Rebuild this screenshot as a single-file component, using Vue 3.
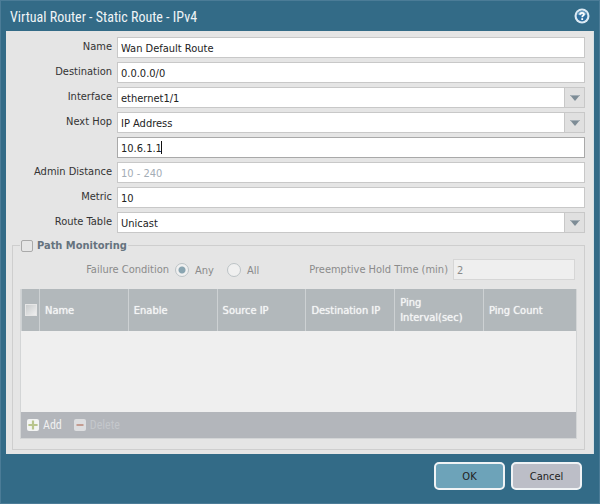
<script setup>
import { ref } from 'vue'

const fields = ref([
  { id: 'name', label: 'Name', kind: 'text', value: 'Wan Default Route' },
  { id: 'destination', label: 'Destination', kind: 'text', value: '0.0.0.0/0' },
  { id: 'interface', label: 'Interface', kind: 'select', value: 'ethernet1/1' },
  { id: 'next-hop', label: 'Next Hop', kind: 'select', value: 'IP Address' },
  { id: 'next-hop-ip', label: '', kind: 'text', value: '10.6.1.1', active: true },
  { id: 'admin-distance', label: 'Admin Distance', kind: 'text', value: '', placeholder: '10 - 240' },
  { id: 'metric', label: 'Metric', kind: 'text', value: '10' },
  { id: 'route-table', label: 'Route Table', kind: 'select', value: 'Unicast' },
])
const columns = ['Name', 'Enable', 'Source IP', 'Destination IP', 'Ping Interval(sec)', 'Ping Count']
const monitoring = ref(false)
const condition = ref('any')
const holdTime = ref('2')
</script>

<template>
  <form class="dialog" @submit.prevent>
    <header class="titlebar">
      <h1>Virtual Router - Static Route - IPv4</h1>
      <button type="button" class="help" aria-label="Help">
        <svg viewBox="0 0 16 16" width="16" height="16">
          <circle cx="8" cy="8" r="7.5" fill="#dceaf4" />
          <circle cx="8" cy="8" r="5.4" fill="#2f6f9f" />
          <path d="M3.2 6.4a5 5 0 0 1 9.6 0Q8 8.6 3.2 6.4z" fill="#6d9fc2" />
          <path d="M6 6.7C6 4.2 10 4.3 10 6.4 10 7.7 8.2 7.7 8.2 9.3" fill="none" stroke="#fff" stroke-width="1.7" />
          <rect x="7.3" y="10.2" width="1.8" height="1.8" fill="#fff" />
        </svg>
      </button>
    </header>

    <main class="panel">
      <div class="fields">
        <div v-for="f in fields" :key="f.id" class="field">
          <label :for="f.id">{{ f.label }}</label>
          <div class="control" :class="{ active: f.active }">
            <select v-if="f.kind === 'select'" :id="f.id" v-model="f.value">
              <option>{{ f.value }}</option>
            </select>
            <input v-else :id="f.id" v-model="f.value" type="text" :placeholder="f.placeholder" autocomplete="off">
            <span v-if="f.kind === 'select'" class="trigger" aria-hidden="true">
              <svg viewBox="0 0 10 6" width="10" height="6"><path d="M0 0h10L5 6z" fill="#7d8c96" /><path d="M0 0h10L9 1H1z" fill="#a4aeb5" /></svg>
            </span>
            <span v-if="f.active" class="caret" aria-hidden="true"></span>
          </div>
        </div>
      </div>

      <fieldset class="monitor">
        <legend>
          <input id="path-monitoring" v-model="monitoring" type="checkbox" class="check">
          <label for="path-monitoring">Path Monitoring</label>
        </legend>

        <div class="options">
          <span id="condition-label" class="condition">Failure Condition</span>
          <div class="radios" role="radiogroup" aria-labelledby="condition-label">
            <label><input v-model="condition" type="radio" name="condition" value="any" disabled><span>Any</span></label>
            <label><input v-model="condition" type="radio" name="condition" value="all" disabled><span>All</span></label>
          </div>
          <label class="hold-label" for="hold-time">Preemptive Hold Time (min)</label>
          <input id="hold-time" v-model="holdTime" class="hold" type="text" disabled>
        </div>

        <div class="grid">
          <table>
            <thead>
              <tr>
                <th class="pick"><input type="checkbox" class="check small" aria-label="Select all" disabled></th>
                <th v-for="c in columns" :key="c" scope="col">{{ c }}</th>
              </tr>
            </thead>
          </table>
          <div class="empty"></div>
          <div class="toolbar">
            <button type="button" disabled>
              <svg viewBox="0 0 14 14" width="14" height="14">
                <rect x="1" y="1" width="12" height="12" rx="2" fill="#f3f4f3" />
                <path d="M7 2.4v9.2M2.4 7h9.2" stroke="#b9c58d" stroke-width="2.2" />
              </svg>
              <span>Add</span>
            </button>
            <button type="button" class="faint" disabled>
              <svg viewBox="0 0 14 14" width="14" height="14">
                <rect x="1" y="1" width="12" height="12" rx="2" fill="#dddee0" />
                <path d="M3.5 7h7" stroke="#c39c91" stroke-width="2" />
              </svg>
              <span>Delete</span>
            </button>
          </div>
        </div>
      </fieldset>
    </main>

    <footer class="actions">
      <button type="submit" class="ok">OK</button>
      <button type="button">Cancel</button>
    </footer>
  </form>
</template>

<style>
body {
  margin: 0;
  background: #336b87;
}
</style>

<style scoped>
* {
  box-sizing: border-box;
}

.dialog {
  min-height: 100vh;
  display: flex;
  flex-direction: column;
  padding: 0 5px;
  border: 1px solid #4b7c97;
  background: #336b87;
  color: #333;
  font: 11px/15px "DejaVu Sans Condensed", "Noto Sans", sans-serif;
}

input,
select,
button {
  margin: 0;
  font: inherit;
  color: inherit;
}

.titlebar {
  height: 30px;
  display: flex;
  align-items: center;
  justify-content: space-between;
  padding: 0 4px;
}

h1 {
  margin: 0;
  padding-top: 2px;
  color: #f0f4f6;
  font: 14px/20px "Roboto Condensed", Roboto, sans-serif;
}

.help {
  display: flex;
  padding: 0;
  border: 0;
  background: none;
}

.panel {
  flex: 1;
  display: flex;
  flex-direction: column;
  gap: 5px;
  padding: 6px 8px 4px 6px;
  border: 0 solid #d5e0e5;
  border-right-width: 1px;
  background: #e5e5e5;
}

.fields {
  display: flex;
  flex-direction: column;
  gap: 4px;
}

.field {
  display: grid;
  grid-template-columns: 100px 1fr;
  gap: 5px;
  height: 21px;
}

.field label {
  padding-top: 2px;
  text-align: right;
  white-space: nowrap;
}

.control {
  position: relative;
  display: flex;
  border: 1px solid #c8c8c8;
  background: #fff;
  color: #222;
}

.control.active {
  border-color: #a9a9a9;
}

.control input,
.control select {
  flex: 1;
  min-width: 0;
  padding: 1px 3px 0;
  border: 0;
  outline: 0;
  background: none;
  appearance: none;
}

.control input::placeholder {
  color: #a3adb6;
  opacity: 1;
}

.trigger {
  width: 20px;
  display: flex;
  align-items: center;
  justify-content: center;
  border-left: 1px solid #c8c8c8;
  background: #e0e0e0;
  pointer-events: none;
}

.caret {
  position: absolute;
  top: 3px;
  left: 43px;
  width: 1px;
  height: 13px;
  background: #111;
}

.monitor {
  flex: 1;
  min-width: 0;
  margin: 0;
  padding: 6px 7px 10px;
  border: 1px solid #cecece;
}

legend {
  display: flex;
  align-items: center;
  gap: 4px;
  margin: 0;
  padding: 0 1px;
  color: #65737e;
  font-weight: 700;
}

.check {
  width: 12px;
  height: 12px;
  appearance: none;
  border: 1px solid #aaa;
  border-radius: 2px;
  background: #e6e6e6;
}

.check.small {
  display: block;
  border: 1px solid #e6e6e6;
  border-radius: 0;
  background: linear-gradient(135deg, #c9cccd, #efefef);
}

.options {
  display: flex;
  align-items: center;
  height: 21px;
  margin-right: 2px;
  color: #8b8b8b;
  white-space: nowrap;
}

.condition {
  width: 149px;
  text-align: right;
}

.radios {
  display: flex;
  gap: 13px;
  margin-left: 6px;
}

.radios label {
  display: flex;
  align-items: center;
  gap: 6px;
}

.radios span {
  padding-top: 1px;
}

.radios input {
  width: 14px;
  height: 14px;
  appearance: none;
  border: 1px solid #bcc3c6;
  border-radius: 50%;
  background: #f0f0f0;
}

.radios input:checked {
  background: radial-gradient(circle, #8aa5b1 0 3px, #f0f0f0 4px);
}

.hold-label {
  margin-left: auto;
}

.hold {
  width: 122px;
  height: 21px;
  margin-left: 5px;
  padding: 1px 3px 0;
  border: 1px solid #d6d6d6;
  background: #efefef;
}

.grid {
  margin-top: 9px;
  border: 1px solid #d3d5d6;
  border-width: 0 1px 1px;
}

table {
  width: 100%;
  table-layout: fixed;
  border-collapse: separate;
  border-spacing: 0;
  background: #b2b8bb;
  color: #f4f5f5;
}

th {
  width: 16%;
  height: 42px;
  padding: 0 4px 0 5px;
  border-left: 1px solid #cdd1d3;
  text-align: left;
  font-weight: 400;
  text-shadow: 0 0 1px #f4f5f5;
}

th:last-child {
  width: auto;
}

th.pick {
  width: 18px;
  padding: 0 2px 0 3px;
}

.empty {
  min-height: 81px;
  background: #efefef;
}

.toolbar {
  display: flex;
  align-items: center;
  gap: 11px;
  height: 26px;
  padding: 0 5px;
  background: #b3b6bb;
  font: 12px/15px "Roboto Condensed", Roboto, sans-serif;
}

.toolbar button {
  display: flex;
  align-items: center;
  gap: 3px;
  padding: 0;
  border: 0;
  background: none;
  color: #f0f0f1;
}

.toolbar .faint {
  color: #c4c7cb;
}

.actions {
  display: flex;
  justify-content: flex-end;
  gap: 6px;
  padding: 8px 12px 13px;
}

.actions button {
  width: 71px;
  height: 28px;
  padding: 0;
  border: 2px solid #f0f3f5;
  border-radius: 5px;
  background: #bcbec7;
  color: #222;
}

.actions .ok {
  background: #6da3b9;
}
</style>
